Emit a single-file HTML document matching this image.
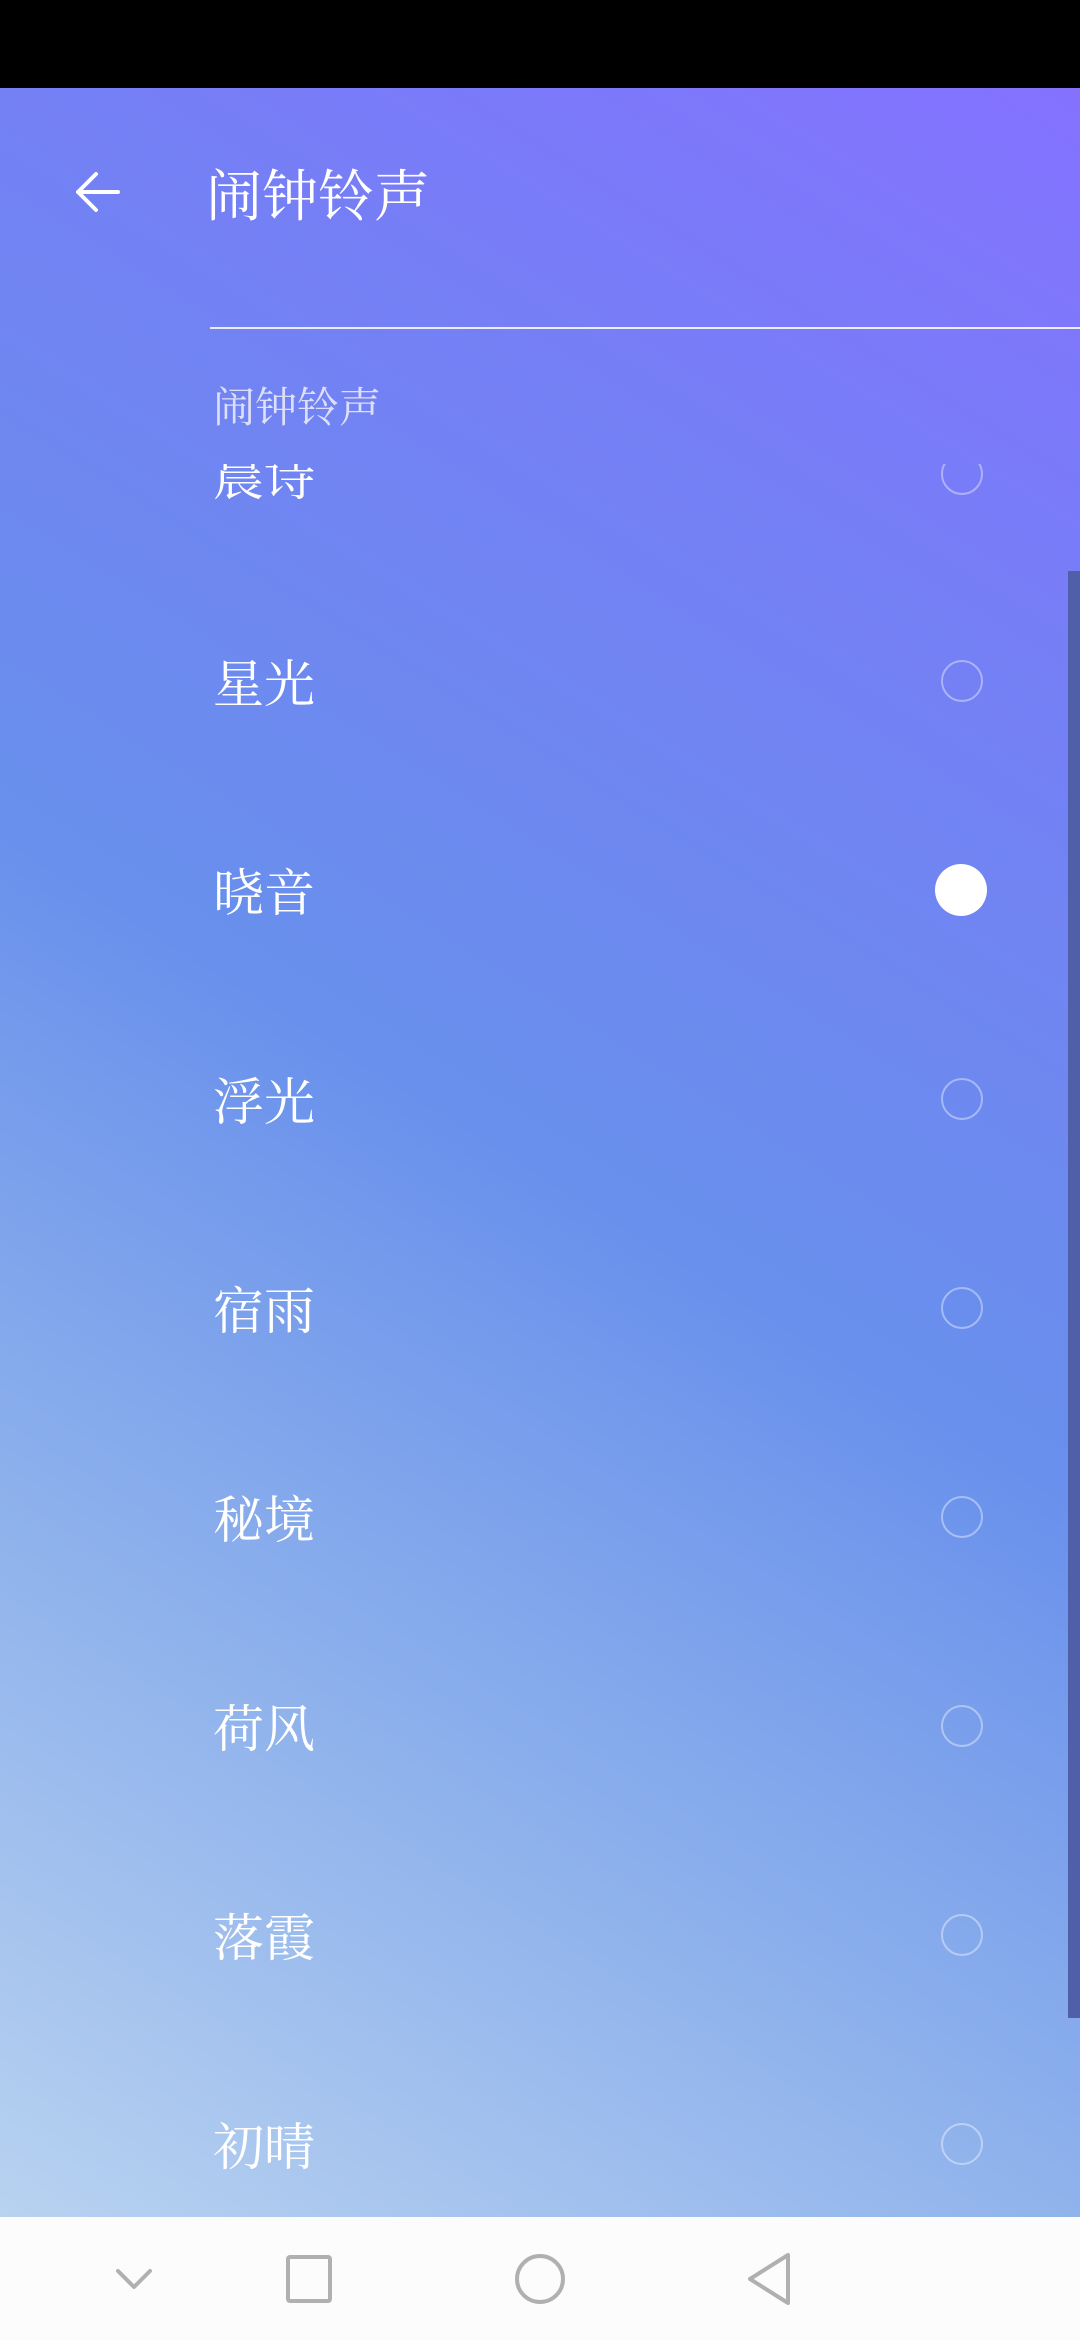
<!DOCTYPE html>
<html><head><meta charset="utf-8">
<style>
html,body{margin:0;padding:0;}
body{width:1080px;height:2340px;position:relative;overflow:hidden;font-family:"Liberation Serif","Noto Serif CJK SC",serif;}
.bg{position:absolute;left:0;top:88px;width:1080px;height:2130px;background:linear-gradient(212deg,#8472ff 0%,#7381f4 25%,#6890ec 50%,#8aaeec 72%,#b8d2f0 100%);overflow:hidden;}
.status{position:absolute;left:0;top:0;width:1080px;height:88px;background:#000;}
.title{position:absolute;left:206px;top:161px;font-size:56px;color:#fff;line-height:74px;}
.divider{position:absolute;left:210px;right:0;top:327px;height:2px;background:rgba(255,255,255,.85);}
.sec{position:absolute;left:213px;top:383px;font-size:42px;color:rgba(240,240,250,.85);line-height:52px;}
.list{position:absolute;left:0;top:464px;width:1080px;height:1754px;overflow:hidden;}
.item{position:absolute;left:0;width:1080px;height:209px;}
.item span{position:absolute;left:213px;top:50%;transform:translateY(-50%);font-size:51px;color:#fff;line-height:62px;}
.radio{position:absolute;left:941px;top:50%;margin-top:-26px;width:38px;height:38px;border:2px solid rgba(255,255,255,.4);border-radius:50%;}
.sel{left:935px;margin-top:-31px;width:46px;height:46px;background:#fff;border:3px solid rgba(255,255,255,.7);box-shadow:0 0 0 2px rgba(255,255,255,.4) inset;}
.scroll{position:absolute;left:1068px;top:571px;width:12px;height:1447px;background:#5060a8;}
.nav{position:absolute;left:0;top:2217px;width:1080px;height:123px;background:#fcfcfc;}
</style></head><body>
<div class="status"></div>
<div class="bg"></div>
<svg style="position:absolute;left:70px;top:168px" width="54" height="48" viewBox="0 0 54 48"><path d="M48 24H8M26 6L8 24l18 18" stroke="#fff" stroke-width="4" fill="none" stroke-linecap="round" stroke-linejoin="round"/></svg>
<div class="title">闹钟铃声</div>
<div class="divider"></div>
<div class="sec">闹钟铃声</div>
<div class="list">
<div class="item" style="top:-90px"><span>晨诗</span><div class="radio"></div></div>
<div class="item" style="top:117px"><span>星光</span><div class="radio"></div></div>
<div class="item" style="top:326px"><span>晓音</span><div class="radio sel"></div></div>
<div class="item" style="top:535px"><span>浮光</span><div class="radio"></div></div>
<div class="item" style="top:744px"><span>宿雨</span><div class="radio"></div></div>
<div class="item" style="top:953px"><span>秘境</span><div class="radio"></div></div>
<div class="item" style="top:1162px"><span>荷风</span><div class="radio"></div></div>
<div class="item" style="top:1371px"><span>落霞</span><div class="radio"></div></div>
<div class="item" style="top:1580px"><span>初晴</span><div class="radio"></div></div>
</div>
<div class="scroll"></div>
<div class="nav">
<svg style="position:absolute;left:0;top:0" width="1080" height="123" viewBox="0 0 1080 123">
<g stroke="#b0b0b0" stroke-width="4" fill="none" stroke-linejoin="round" stroke-linecap="round">
<path d="M118 54l16 16 16-16"/>
<rect x="288" y="40" width="42" height="44" rx="2"/>
<circle cx="540" cy="62" r="23"/>
<path d="M788 38v48L750 62z"/>
</g></svg>
</div>
</body></html>
